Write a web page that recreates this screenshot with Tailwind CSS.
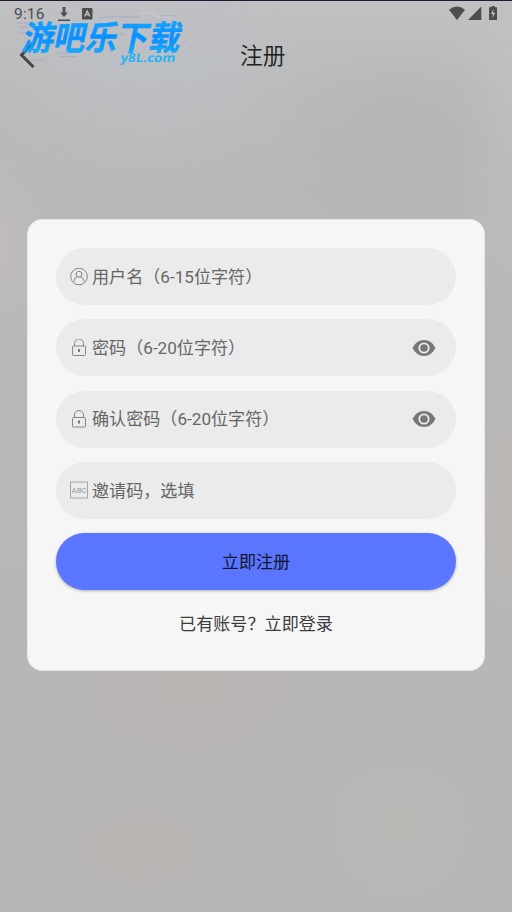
<!DOCTYPE html>
<html lang="zh-CN">
<head>
<meta charset="utf-8">
<meta name="viewport" content="width=device-width, initial-scale=1">
<title>注册</title>
<script src="https://cdn.jsdelivr.net/npm/@tailwindcss/browser@4"></script>
</head>
<body class="relative h-[912px] w-[512px] overflow-hidden bg-[#b9b8b8] font-[Roboto,'Noto_Sans_CJK_SC',sans-serif] font-normal">
<!-- soft backdrop -->
<div class="absolute inset-0 bg-[radial-gradient(ellipse_180px_130px_at_150px_55px,#bcbfc4,transparent),radial-gradient(ellipse_140px_110px_at_400px_150px,#b6b5b5,transparent),radial-gradient(ellipse_60px_260px_at_512px_60px,#c0c0c0,transparent),radial-gradient(ellipse_60px_110px_at_0px_245px,#bfbbba,transparent),radial-gradient(ellipse_160px_120px_at_190px_680px,#bcb5b4,transparent),radial-gradient(ellipse_150px_100px_at_140px_850px,#b9b5b3,transparent),radial-gradient(ellipse_120px_120px_at_400px_825px,#bab8b5,transparent),radial-gradient(ellipse_40px_120px_at_512px_510px,#bdb8b5,transparent),linear-gradient(180deg,#c1c1c2_0px,#b9baba_90px,#b8b8b8_200px,#b9b8b7_500px,#b6b6b6_700px,#b7b7b7_912px)]"></div>
<div class="relative flex h-full flex-col">
  <div class="flex h-7 shrink-0 items-start justify-between border-t border-[#211c30] pr-[14px] pl-[14px]">
    <div class="flex text-[#4d4d4e]">
      <span class="w-11 pt-[4px] text-[15.5px] leading-[19px] tracking-[0.2px]">9:16</span>
      <svg class="mt-[6px] h-[15px] w-[12px]" viewBox="0 0 12 15" fill="currentColor"><path d="M4.600 0h2.800v5.500H10L6 10 2 5.500h2.600zM0 12.500h12V14H0z"/></svg>
      <svg class="mt-[7px] ml-[12px] h-3 w-[11px]" viewBox="0 0 11 12"><rect width="10.500" height="11.500" rx="1.200" fill="currentColor"/><path d="M2.700 8.500 5.200 3l2.600 5.500M3.700 6.700h3" fill="none" stroke="#c5c5c5" stroke-width="1.300"/></svg>
    </div>
    <svg class="mt-[5px] h-[15px] w-[49px] text-[#4d4d4e]" viewBox="0 0 49 15" fill="currentColor">
      <path d="M0 3.700Q8-2.600 16 3.700L8 14z"/><path d="M32.300.500V14H19z"/><path d="M42.500 0h3.200v1.300H48V14h-8V1.300h2.500z"/><path d="m44.700 3-3 5H44l-.8 4 3.200-5.300H44z" fill="#c3c3c3"/>
    </svg>
  </div>
  <header class="flex h-[55px] shrink-0 items-center pl-[19px]">
    <svg class="h-8 w-4" viewBox="0 0 16 32" fill="none" stroke="#454545" stroke-width="3"><path d="M14.500 3 2.500 15 14.500 27"/></svg>
    <h1 class="mt-px ml-[205px] text-[22.800px] leading-[33px] font-[350] text-[#202021]">注册</h1>
  </header>
  <main class="mx-[27px] mt-[136px] flex h-[452px] w-[458px] shrink-0 flex-col rounded-[15px] border border-[#e6e6e6] bg-[#f6f6f6] px-[28px] pt-[28px] text-[17.100px] text-[#666]">
    <form class="flex flex-col gap-[14.250px]">
      <label class="flex h-[57px] items-center rounded-full bg-[#ebebeb] pl-[14px]">
        <svg class="h-[18px] w-[18px]" viewBox="0 0 18 18" fill="none" stroke="#777" stroke-width="0.900"><circle cx="9" cy="8.500" r="8.300"/><circle cx="9" cy="6.200" r="2.900"/><path d="M4.300 13.500v-1q.2-3.200 3.200-3.700M13.700 13.500v-1q-.2-3.200-3.200-3.700"/></svg>
        <span class="mt-[2px] ml-1 leading-[25px]">用户名（6-15位字符）</span>
      </label>
      <label class="flex h-[57px] items-center rounded-full bg-[#ebebeb] pl-[14px]">
        <svg class="h-[18px] w-[18px]" viewBox="0 0 18 18" fill="none" stroke="#858585"><rect x="2.500" y="7" width="13" height="9.500" rx="1"/><path d="M4.500 7V4.500a4.500 4.500 0 0 1 9 0V7"/><path d="M9 10v3" stroke-width="1.700" stroke="#666"/></svg>
        <span class="mt-[2px] ml-1 flex-1 leading-[25px]">密码（6-20位字符）</span>
        <svg class="mr-5 h-4 w-[24px]" viewBox="0 0 23 16"><path d="M0 8Q3.800.1 11.500.1T23 8q-3.800 7.900-11.500 7.900T0 8z" fill="#777"/><circle cx="11.500" cy="8" r="4.700" fill="#777" stroke="#ebebeb" stroke-width="1.800"/></svg>
      </label>
      <label class="flex h-[57px] items-center rounded-full bg-[#ebebeb] pl-[14px]">
        <svg class="h-[18px] w-[18px]" viewBox="0 0 18 18" fill="none" stroke="#858585"><rect x="2.500" y="7.500" width="13" height="9.500" rx="1"/><path d="M4.500 7.500V5a4.500 4.500 0 0 1 9 0v2.500"/><path d="M9 10.500v3" stroke-width="1.700" stroke="#666"/></svg>
        <span class="mt-px ml-1 flex-1 leading-[25px]">确认密码（6-20位字符）</span>
        <svg class="mr-5 h-4 w-[24px]" viewBox="0 0 23 16"><path d="M0 8Q3.800.1 11.500.1T23 8q-3.800 7.900-11.500 7.900T0 8z" fill="#777"/><circle cx="11.500" cy="8" r="4.700" fill="#777" stroke="#ebebeb" stroke-width="1.800"/></svg>
      </label>
      <label class="flex h-[57px] items-center rounded-full bg-[#ebebeb] pl-[14px]">
        <svg class="h-[18px] w-[18px]" viewBox="0 0 18 18"><rect x=".500" y="1" width="17" height="16" fill="none" stroke="#a5a5a5"/><text x="1.600" y="11.500" font-family="Roboto,sans-serif" font-size="7.800" textLength="15" lengthAdjust="spacingAndGlyphs" fill="#999">ABC</text></svg>
        <span class="mt-[2px] ml-1 leading-[25px]">邀请码，选填</span>
      </label>
      <button type="button" class="h-[57px] rounded-full bg-[#5a76ff] pt-[2px] leading-[25px] text-[#11152a] shadow-[0_1px_3px_rgba(0,0,0,0.3)]">立即注册</button>
    </form>
    <a class="mt-[22px] text-center leading-[25px] text-[#3c3c3c]">已有账号？立即登录</a>
  </main>
</div>
<!-- site mark over the header -->
<svg class="absolute top-0 left-0 h-20 w-[200px]" viewBox="0 0 200 80">
  <defs><linearGradient id="mark" x1="0" y1="0" x2="0" y2="1"><stop offset="0" stop-color="#1cb0ff"/><stop offset=".55" stop-color="#078fff"/><stop offset="1" stop-color="#1cbaf5"/></linearGradient></defs>
  <g fill="none" stroke="#8e91cd" stroke-width=".7" opacity=".6"><path d="M17 23h15M20 27h8M18 33h8M31 60h12l4-4M55 53h12M99 19l6-2h35M61 56.500h14M160 16h16M176 50l10-10M118 34h6M170 37l8-8"/><path d="M140 13h14l4 4h15" stroke="#e1e2ee"/></g>
  <text transform="translate(21 50) skewX(-12) scale(1 1.020)" font-family="'Noto Sans CJK SC',sans-serif" font-weight="700" font-size="33" textLength="158" lengthAdjust="spacingAndGlyphs" fill="url(#mark)" stroke="#0b98ff" stroke-width=".4">游吧乐下载</text>
  <text transform="translate(120 62) skewX(-8)" font-family="'Open Sans',sans-serif" font-weight="700" font-size="12" textLength="55" lengthAdjust="spacingAndGlyphs" fill="#27b4f4">y8L.com</text>
</svg>
</body>
</html>
